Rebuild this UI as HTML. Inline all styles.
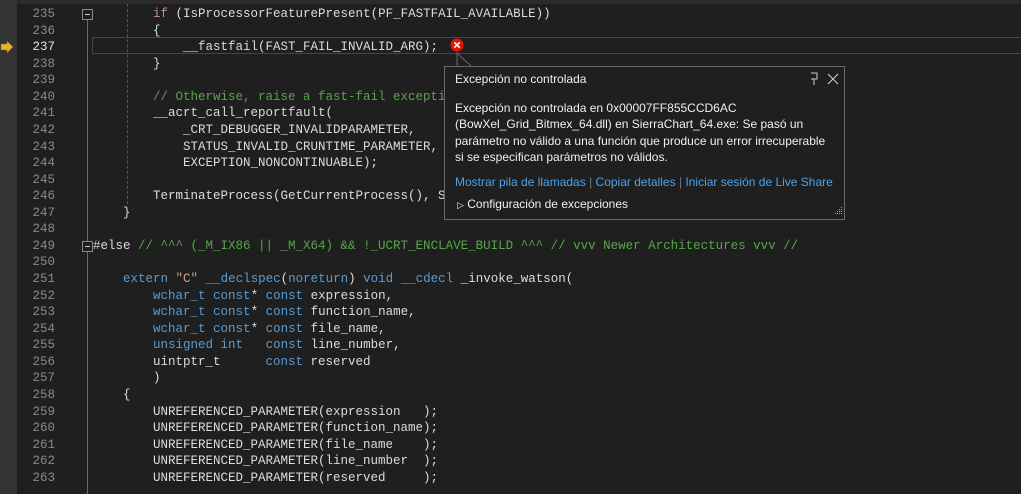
<!DOCTYPE html>
<html><head><meta charset="utf-8"><style>
body{margin:0;width:1021px;height:494px;background:#1f1f1f;overflow:hidden;position:relative;font-family:"Liberation Mono",monospace}
.top{position:absolute;left:0;top:0;width:1021px;height:4px;background:#2b2b2b}
.lm{position:absolute;left:0;top:0;width:17px;height:494px;background:#333}
.ln{position:absolute;left:17px;top:6px;width:38px;text-align:right;color:#8a8a8a;font-size:12.5px;line-height:16.57px;white-space:pre}
.code{position:absolute;left:93px;top:6px;color:#dcdcdc;font-size:12.5px;line-height:16.57px;white-space:pre}
.k{color:#569cd6}.p{color:#c586c0}.c{color:#57a64a}.s{color:#d69d85}
.pop{position:absolute;left:444px;top:66px;width:399px;height:152px;border:1px solid #6a6a6a;background:#1f1f1f;font-family:"Liberation Sans",sans-serif;font-size:12px;color:#f0f0f0}
.pop a{color:#4ea1e8;text-decoration:none}
</style></head><body>
<div class="top"></div><div class="lm"></div>
<svg style="position:absolute;left:0;top:41px" width="14" height="12"><path d="M1 3h6V0l6 6-6 6V9H1z" fill="#e8b230" stroke="#8a6a10" stroke-width=".6"/></svg>
<div class="ln">235
236
<span style="color:#e0e0e0">237</span>
238
239
240
241
242
243
244
245
246
247
248
249
250
251
252
253
254
255
256
257
258
259
260
261
262
263</div>
<div style="position:absolute;left:87px;top:10px;width:1px;height:484px;background:#6a6a6a"></div>
<div style="position:absolute;left:127px;top:4px;width:0;height:200px;border-left:1px dashed #555"></div>
<div style="position:absolute;left:82px;top:9px;width:9px;height:9px;border:1px solid #8a8a8a;background:#1f1f1f"><div style="margin:4px 2px;height:1px;background:#ccc"></div></div>
<div style="position:absolute;left:82px;top:241px;width:9px;height:9px;border:1px solid #8a8a8a;background:#1f1f1f"><div style="margin:4px 2px;height:1px;background:#ccc"></div></div>
<div style="position:absolute;left:92px;top:37px;width:940px;height:15px;border:1px solid #464646"></div>
<div class="code">        <span class="p">if</span> (IsProcessorFeaturePresent(PF_FASTFAIL_AVAILABLE))
        {
            __fastfail(FAST_FAIL_INVALID_ARG);
        }

        <span class="c">// Otherwise, raise a fast-fail excepti</span>
        __acrt_call_reportfault(
            _CRT_DEBUGGER_INVALIDPARAMETER,
            STATUS_INVALID_CRUNTIME_PARAMETER,
            EXCEPTION_NONCONTINUABLE);

        TerminateProcess(GetCurrentProcess(), S
    }

#else <span class="c">// ^^^ (_M_IX86 || _M_X64) &amp;&amp; !_UCRT_ENCLAVE_BUILD ^^^ // vvv Newer Architectures vvv //</span>

    <span class="k">extern</span> <span class="s">"C"</span> <span class="k">__declspec</span>(<span class="k">noreturn</span>) <span class="k">void</span> <span class="k">__cdecl</span> _invoke_watson(
        <span class="k">wchar_t</span> <span class="k">const</span>* <span class="k">const</span> expression,
        <span class="k">wchar_t</span> <span class="k">const</span>* <span class="k">const</span> function_name,
        <span class="k">wchar_t</span> <span class="k">const</span>* <span class="k">const</span> file_name,
        <span class="k">unsigned</span> <span class="k">int</span>   <span class="k">const</span> line_number,
        uintptr_t      <span class="k">const</span> reserved
        )
    {
        UNREFERENCED_PARAMETER(expression   );
        UNREFERENCED_PARAMETER(function_name);
        UNREFERENCED_PARAMETER(file_name    );
        UNREFERENCED_PARAMETER(line_number  );
        UNREFERENCED_PARAMETER(reserved     );</div>
<svg style="position:absolute;left:450px;top:38px" width="14" height="14"><circle cx="7" cy="7" r="6.5" fill="#e51400"/><path d="M4.3 4.3l5.4 5.4M9.7 4.3l-5.4 5.4" stroke="#fff" stroke-width="1.6"/></svg>
<svg style="position:absolute;left:444px;top:52px" width="30" height="16"><path d="M13 15L13 1 28 15" fill="#1f1f1f" stroke="#6a6a6a"/></svg>
<div class="pop">
<div style="position:absolute;left:10px;top:5px">Excepción no controlada</div>
<svg style="position:absolute;left:363px;top:5px" width="34" height="14"><path d="M3 1h6v6H3M6 7v6" fill="none" stroke="#ccc"/><path d="M20 2l10 10M30 2l-10 10" stroke="#ccc" stroke-width="1.1"/></svg>
<div style="position:absolute;left:10px;top:33px;line-height:16.3px;width:390px">Excepción no controlada en 0x00007FF855CCD6AC<br>(BowXel_Grid_Bitmex_64.dll) en SierraChart_64.exe: Se pasó un<br>parámetro no válido a una función que produce un error irrecuperable<br>si se especifican parámetros no válidos.</div>
<div style="position:absolute;left:10px;top:108px;white-space:nowrap"><a>Mostrar pila de llamadas</a> <span style="color:#777">|</span> <a>Copiar detalles</a> <span style="color:#777">|</span> <a>Iniciar sesión de Live Share</a></div>
<div style="position:absolute;left:12px;top:130px;white-space:nowrap"><span style="font-size:9px">▷</span> Configuración de excepciones</div>
<svg style="position:absolute;left:388px;top:140px" width="10" height="10"><g fill="#aaa"><rect x="8" y="0" width="1" height="1"/><rect x="6" y="2" width="1" height="1"/><rect x="8" y="2" width="1" height="1"/><rect x="4" y="4" width="1" height="1"/><rect x="6" y="4" width="1" height="1"/><rect x="8" y="4" width="1" height="1"/><rect x="2" y="6" width="1" height="1"/><rect x="4" y="6" width="1" height="1"/><rect x="6" y="6" width="1" height="1"/><rect x="8" y="6" width="1" height="1"/></g></svg>
</div>
</body></html>
